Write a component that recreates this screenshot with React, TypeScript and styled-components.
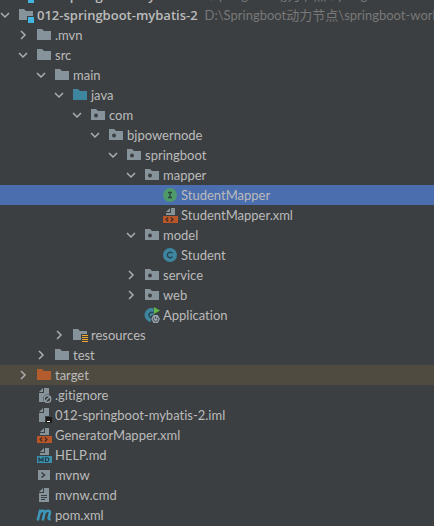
import React from 'react';
import styled, { createGlobalStyle } from 'styled-components';

const GlobalStyle = createGlobalStyle`
  body { margin: 0; background: #3c3f41; }
`;

type IconName =
  | 'module' | 'folder' | 'source' | 'package' | 'resources' | 'excluded'
  | 'interface' | 'class' | 'application' | 'xml' | 'markdown' | 'ignored'
  | 'iml' | 'shell' | 'text' | 'maven';

interface Node {
  name: string;
  icon: IconName;
  level: number;
  open?: boolean;
  path?: string;
  tone?: 'selected' | 'excluded';
}

const nodes: Node[] = [
  { name: '011-springboot-mybatis', icon: 'module', level: 0, open: false, path: 'D:\\Springboot动力节点\\springboot-works' },
  { name: '012-springboot-mybatis-2', icon: 'module', level: 0, open: true, path: 'D:\\Springboot动力节点\\springboot-work' },
  { name: '.mvn', icon: 'folder', level: 1, open: false },
  { name: 'src', icon: 'folder', level: 1, open: true },
  { name: 'main', icon: 'folder', level: 2, open: true },
  { name: 'java', icon: 'source', level: 3, open: true },
  { name: 'com', icon: 'package', level: 4, open: true },
  { name: 'bjpowernode', icon: 'package', level: 5, open: true },
  { name: 'springboot', icon: 'package', level: 6, open: true },
  { name: 'mapper', icon: 'package', level: 7, open: true },
  { name: 'StudentMapper', icon: 'interface', level: 8, tone: 'selected' },
  { name: 'StudentMapper.xml', icon: 'xml', level: 8 },
  { name: 'model', icon: 'package', level: 7, open: true },
  { name: 'Student', icon: 'class', level: 8 },
  { name: 'service', icon: 'package', level: 7, open: false },
  { name: 'web', icon: 'package', level: 7, open: false },
  { name: 'Application', icon: 'application', level: 7 },
  { name: 'resources', icon: 'resources', level: 3, open: false },
  { name: 'test', icon: 'folder', level: 2, open: false },
  { name: 'target', icon: 'excluded', level: 1, open: false, tone: 'excluded' },
  { name: '.gitignore', icon: 'ignored', level: 1 },
  { name: '012-springboot-mybatis-2.iml', icon: 'iml', level: 1 },
  { name: 'GeneratorMapper.xml', icon: 'xml', level: 1 },
  { name: 'HELP.md', icon: 'markdown', level: 1 },
  { name: 'mvnw', icon: 'shell', level: 1 },
  { name: 'mvnw.cmd', icon: 'text', level: 1 },
  { name: 'pom.xml', icon: 'maven', level: 1 },
];

const Panel = styled.main`
  height: 100vh;
  overflow: hidden;
  background: #3c3f41;
`;

/* The list is scrolled so that its first row is mostly above the panel. */
const Tree = styled.ul`
  margin: -15px 0 0;
  padding: 0;
  list-style: none;
  font: 13px/20px Lato, 'Noto Sans CJK SC', sans-serif;
  font-variant-ligatures: none;
  color: #bbbbbb;
`;

const Row = styled.li<{ $level: number; $tone?: Node['tone'] }>`
  display: flex;
  align-items: center;
  height: 20px;
  padding-left: ${(p) => p.$level * 18}px;
  white-space: nowrap;
  background: ${(p) =>
    p.$tone === 'selected' ? '#4b6eaf' : p.$tone === 'excluded' ? '#4f4b41' : 'transparent'};
`;

const Toggle = styled.button`
  flex: none;
  display: flex;
  width: 10px;
  height: 20px;
  margin: 0 8px 0 0;
  padding: 0;
  align-items: center;
  border: 0;
  background: none;
  color: #adadad;
`;

const ToggleSpace = styled.span`
  flex: none;
  width: 18px;
`;

const IconBox = styled.svg`
  flex: none;
  width: 16px;
  height: 16px;
  margin-right: 3px;
`;

const Name = styled.span``;

const ModuleName = styled.strong`
  font-family: 'Open Sans', sans-serif;
  font-weight: 600;
`;

const Path = styled.span`
  margin-left: 7px;
  color: #787878;
`;

const GREY = '#87939a';
const BLUE = '#3e86a0';
const BACK = '#3c3f41';

const Folder = ({ fill = GREY }: { fill?: string }) => (
  <path d="M1 2h5l2 2h7v9H1z" fill={fill} />
);

const Page = ({ d = 'M8 1h5v14H3V6h5z' }: { d?: string }) => (
  <>
    <path d={d} fill={GREY} />
    <path d="M7 1v4H3z" fill={GREY} />
  </>
);

const BandedPage = ({ band }: { band: string }) => (
  <>
    <path d="M9 1h4v7H4V6h5z" fill={GREY} />
    <path d="M8 1v4H4z" fill={GREY} />
    <path d="M1 9h15v7H1z" fill={band} />
  </>
);

const drawings: Record<IconName, React.ReactNode> = {
  folder: <Folder />,
  source: <Folder fill={BLUE} />,
  excluded: <Folder fill="#b35c2e" />,
  module: (
    <>
      <path d="M1 2h5l2 2h7v5H9v4H1z" fill={GREY} />
      <path d="M10 10h6v6h-6z" fill="#40b6e0" />
    </>
  ),
  package: (
    <>
      <Folder />
      <circle cx="6" cy="8.5" r="2" fill={BACK} />
    </>
  ),
  resources: (
    <>
      <path d="M1 2h5l2 2h7v3H9v6H1z" fill={GREY} />
      <path d="M10 8h6v1h-6zM10 10h6v1h-6zM10 12h6v1h-6zM10 14h6v1h-6z" fill="#f0a830" />
    </>
  ),
  interface: (
    <>
      <circle cx="8" cy="8" r="7" fill="#4f9a6b" />
      <path d="M6 5.500h4M8 5v6M6 10.500h4" stroke="#28463a" strokeWidth="1.300" fill="none" />
    </>
  ),
  class: (
    <>
      <circle cx="8" cy="8" r="7" fill={BLUE} />
      <path d="M10.400 6.300A2.800 2.800 0 1 0 10.400 9.700" stroke="#263f4a" strokeWidth="1.300" fill="none" />
    </>
  ),
  application: (
    <>
      <path d="M9.500 1.300A7 7 0 1 0 7 15V9l3-2z" fill={BLUE} />
      <path d="M9.500 5.800A2.800 2.800 0 1 0 7.500 10.800" stroke="#263f4a" strokeWidth="1.300" fill="none" />
      <path d="M10 0l6 3.500-6 3.500z" fill="#62b543" />
      <path d="M9.500 8h4.200l2.200 4-2.200 4H9.500l-2.200-4z" fill="#9aa7b0" />
      <path d="M10 10.500a2.300 2.300 0 1 0 3.200 0M11.600 9.500v2.300" stroke={BACK} strokeWidth="0.900" fill="none" />
    </>
  ),
  xml: (
    <>
      <BandedPage band="#b8562a" />
      <path d="M6.200 10.500L4 12.500l2.200 2M8.800 10.500L11 12.500l-2.200 2" stroke="#3a2a24" strokeWidth="1.100" fill="none" />
    </>
  ),
  markdown: (
    <>
      <BandedPage band="#3d8fae" />
      <path d="M3 15v-4l2 2.500 2-2.500v4M9.500 10.800v3.700h1.300q2 0 2-1.850t-2-1.850z" stroke="#1f3843" strokeWidth="1.100" fill="none" />
    </>
  ),
  ignored: (
    <>
      <Page />
      <circle cx="11.500" cy="12" r="4.500" fill={BACK} />
      <circle cx="11.500" cy="12" r="3.300" stroke="#9aa7b0" strokeWidth="1.200" fill="none" />
      <path d="M9.300 14.200l4.400-4.400" stroke="#9aa7b0" strokeWidth="1.200" />
    </>
  ),
  iml: (
    <>
      <Page d="M8 1h5v8H9v6H3V6h5z" />
      <path d="M10 10h6v6h-6z" fill="#1d1a1a" />
      <path d="M11 14h3v1h-3z" fill="#fff" />
    </>
  ),
  shell: (
    <>
      <path d="M2 3h12v10H2z" fill={GREY} />
      <path d="M5.500 5.500L8.500 8l-3 2.500" stroke={BACK} strokeWidth="1.600" fill="none" />
    </>
  ),
  text: (
    <>
      <Page />
      <path d="M5 8.500h6M5 10.500h6M5 12.500h4" stroke={BACK} />
    </>
  ),
  maven: (
    <g stroke="#3e97b8" strokeWidth="2.600" fill="none">
      <path d="M4.400 2.500L1.700 13.500" />
      <path d="M3.600 5.700Q5.200 3.700 7 3.700q2 0 1.500 2.200L6.700 13.500" />
      <path d="M8.400 5.700Q10.200 3.700 12 3.700q2.400 0 1.900 2.200L12.700 10.800q-.4 1.600 1.900 1.300" />
    </g>
  ),
};

const TreeRow = ({ node }: { node: Node }) => (
  <Row $level={node.level} $tone={node.tone}>
    {node.open === undefined ? (
      <ToggleSpace />
    ) : (
      <Toggle type="button" aria-expanded={node.open} aria-label={node.name}>
        <svg width="10" height="10" fill="none" stroke="currentColor" strokeWidth="1.500">
          <path d={node.open ? 'M1 3l4 4 4-4' : 'M3 1l4 4-4 4'} />
        </svg>
      </Toggle>
    )}
    <IconBox viewBox="0 0 16 16" aria-hidden="true">{drawings[node.icon]}</IconBox>
    {node.icon === 'module' ? <ModuleName>{node.name}</ModuleName> : <Name>{node.name}</Name>}
    {node.path && <Path>{node.path}</Path>}
  </Row>
);

export default function App() {
  return (
    <>
      <GlobalStyle />
      <Panel>
        <Tree>
          {nodes.map((node) => (
            <TreeRow key={node.name} node={node} />
          ))}
        </Tree>
      </Panel>
    </>
  );
}
